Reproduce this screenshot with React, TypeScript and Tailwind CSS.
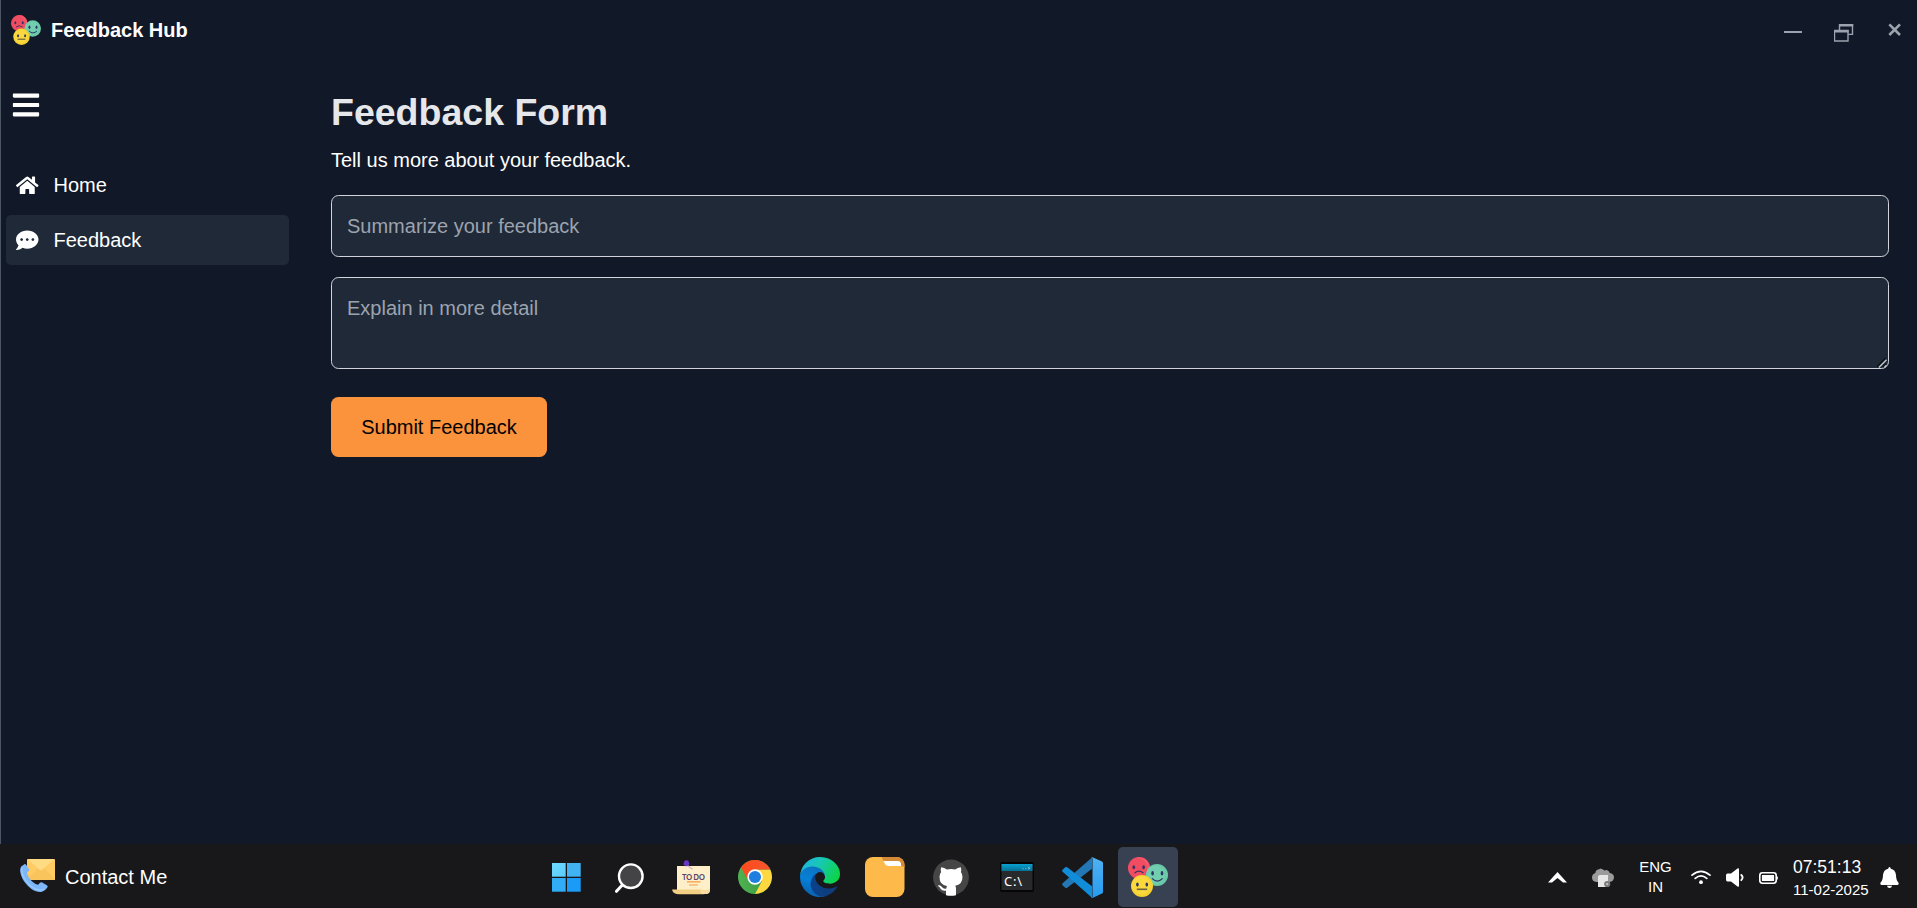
import React from "react";
import { FaBars, FaCommentDots, FaHome } from "react-icons/fa";

type IconProps = { className?: string };

function FacesIcon({ className }: IconProps) {
  return (
    <svg viewBox="0 0 40 40" className={className}>
      <circle cx="11" cy="11" r="11" fill="#f04d62" />
      <path d="M11 0a11 11 0 0 1 0 22q9-2 8-12Q18 2 8 .5Z" fill="#ff5e70" opacity=".5" />
      <ellipse cx="5.8" cy="10.3" rx="1.3" ry="2" fill="#2d3563" />
      <ellipse cx="15.6" cy="10.3" rx="1.3" ry="2" fill="#2d3563" />
      <path d="M7 15.8Q11 12.6 15 15.8" fill="none" stroke="#2d3563" strokeWidth="1.2" strokeLinecap="round" />
      <circle cx="29" cy="18" r="11" fill="#69c9a8" />
      <circle cx="27.5" cy="17.5" r="9" fill="#7cd6b8" opacity=".45" />
      <ellipse cx="24.6" cy="16.3" rx="1.3" ry="2.2" fill="#2d3563" />
      <ellipse cx="34" cy="16.3" rx="1.3" ry="2.2" fill="#2d3563" />
      <path d="M24.3 21.6q5 5 10 0" fill="none" stroke="#2d3563" strokeWidth="1.3" strokeLinecap="round" />
      <circle cx="14" cy="29" r="11" fill="#f5d131" />
      <circle cx="13" cy="28.2" r="9.2" fill="#ffe04b" opacity=".5" />
      <ellipse cx="9.4" cy="27.6" rx="1.3" ry="2.1" fill="#2d3563" />
      <ellipse cx="18.8" cy="27.6" rx="1.3" ry="2.1" fill="#2d3563" />
      <path d="M8.8 32.3h10.4" stroke="#6c6540" strokeWidth="1.6" />
    </svg>
  );
}

function ContactIcon({ className }: IconProps) {
  return (
    <svg viewBox="0 0 36 34" className={className}>
      <rect x="7" y="0" width="28" height="21" rx="1" fill="#ffcb62" />
      <path d="M7 20.500 17 10h8l10 10.500q0 .5-1 .5H8q-1 0-1-.5Z" fill="#f9c45c" />
      <path d="M7.500 0h27L22 11q-1 .8-2 0Z" fill="#ffdb84" />
      <path d="M1.200 7.500 4 5.400q1.300-.8 2.200.5l2.800 4q.8 1.300-.4 2.300l-1.800 1.400q1 5 5 8.600 3 2.800 6.300 3.600l1.900-2q1-1 2.200-.2l4.600 2.700q1.400.9.500 2.300-1.800 3.200-5.300 4.100-7 1.300-14-5.700Q1 20 .2 12.500-.1 9.300 1.200 7.500Z" fill="#7db7f8" />
      <path d="M2 8.500q-1 4 1.800 9.700 4 8 12.200 12 4.500 1.800 8-.2" fill="none" stroke="#9accff" strokeWidth="1.300" />
    </svg>
  );
}

function WindowsIcon({ className }: IconProps) {
  return (
    <svg viewBox="0 0 29 29" className={className}>
      <defs>
        <linearGradient id="win-a" x1="0" y1="0" x2="1" y2="1">
          <stop offset="0" stopColor="#6fdcff" />
          <stop offset="1" stopColor="#5accfc" />
        </linearGradient>
      </defs>
      <path d="M0 0h13.700v13.700H0z" fill="url(#win-a)" />
      <path d="M15 0h13.700v13.700H15z" fill="#41b3f3" />
      <path d="M0 15h13.700v13.700H0z" fill="#31adf8" />
      <path d="M15 15h13.700v13.700H15z" fill="#1b9bf8" />
    </svg>
  );
}

function SearchIcon({ className }: IconProps) {
  return (
    <svg viewBox="0 0 29 30" className={className}>
      <path d="M1.500 28.300 7.300 22" stroke="#fff" strokeWidth="3" strokeLinecap="round" />
      <circle cx="15.800" cy="13.200" r="11.800" fill="#444446" stroke="#fff" strokeWidth="2.400" />
    </svg>
  );
}

function TodoIcon({ className }: IconProps) {
  return (
    <svg viewBox="0 0 38 35" className={className}>
      <path d="M5 6h33v24q0 4-4 4H5Z" fill="#ffefc8" />
      <path d="M0 29.500h28.500q0 4.500 4.500 4.800H7Q1 34.300 0 29.500Z" fill="#f3cf84" />
      <path d="M28.500 29q.5 5 5 5 4.500-.3 4.500-5.500-3 2.500-9.500.5Z" fill="#fbdda0" />
      <path d="m15.500 5.500 5 3.700" stroke="#cbb5c6" strokeWidth="1.200" />
      <path d="M12.500 1q2-1.500 4 0l1 3.200-3.500 2.200-2.700-2.200Z" fill="#6a36c9" />
      <text x="10" y="19.500" fontFamily="Noto Sans, sans-serif" fontWeight="600" fontSize="8" textLength="23" fill="#59456c">TO DO</text>
      <path d="M15 21.900h13.500M17 25h9" stroke="#f79b42" strokeWidth="1.200" />
    </svg>
  );
}

function ChromeIcon({ className }: IconProps) {
  return (
    <svg viewBox="0 0 34 34" className={className}>
      <defs>
        <linearGradient id="chrome-r" x1="0" y1="0" x2="1" y2="0">
          <stop offset="0" stopColor="#ff4a1c" />
          <stop offset="1" stopColor="#f55530" />
        </linearGradient>
        <linearGradient id="chrome-g" x1="0" y1="0" x2="1" y2="0">
          <stop offset="0" stopColor="#4fb352" />
          <stop offset="1" stopColor="#37953d" />
        </linearGradient>
      </defs>
      <circle cx="17" cy="17" r="17" fill="url(#chrome-g)" />
      <path d="M17 9.500h15.200A17 17 0 0 1 17 34l7-13Z" fill="#ffd740" />
      <path d="M3 7.500A17 17 0 0 1 32.300 9.500H17L10 20Z" fill="url(#chrome-r)" />
      <circle cx="17" cy="17" r="7.700" fill="#fff" />
      <circle cx="17" cy="17" r="6.100" fill="#1f7fe0" />
    </svg>
  );
}

function EdgeIcon({ className }: IconProps) {
  return (
    <svg viewBox="0 0 256 256" className={className}>
      <defs>
        <linearGradient id="edge-navy" x1="0" y1="0" x2="1" y2="0">
          <stop offset="0" stopColor="#0a4390" />
          <stop offset="1" stopColor="#113a74" />
        </linearGradient>
        <linearGradient id="edge-blue" x1=".6" y1="0" x2=".3" y2="1">
          <stop offset="0" stopColor="#0d70bd" />
          <stop offset=".5" stopColor="#0680d7" />
          <stop offset="1" stopColor="#0b5cab" />
        </linearGradient>
        <linearGradient id="edge-green" x1="0" y1=".3" x2="1" y2=".7">
          <stop offset="0" stopColor="#1fb5df" />
          <stop offset=".4" stopColor="#18c7b4" />
          <stop offset="1" stopColor="#0bd541" />
        </linearGradient>
      </defs>
      <path d="M231 190.500c-3.400 1.800-6.900 3.400-10.500 4.700a101 101 0 0 1-35.600 6.400c-47 0-87.900-32.300-87.900-73.800a31.300 31.300 0 0 1 16.300-27.200C70.800 102.400 59.900 146.700 59.900 172.700c0 73.500 67.700 80.900 82.300 80.900 7.900 0 19.800-2.300 26.900-4.500l1.300-.5a128 128 0 0 0 66.600-52.700 4 4 0 0 0-6-5.400z" fill="url(#edge-navy)" />
      <path d="M105.700 241.400a79.200 79.200 0 0 1-22.700-21.300 80.700 80.700 0 0 1 29.500-120c3.100-1.500 8.500-4.100 15.600-4a32.400 32.400 0 0 1 25.700 13 32 32 0 0 1 6.300 18.700c0-.2 24.500-79.600-80-79.600C36.200 48.200 0 90 0 126.600a130 130 0 0 0 12.100 56 128 128 0 0 0 156.400 67 75.500 75.500 0 0 1-62.800-8.200z" fill="url(#edge-blue)" />
      <path d="M152.300 148.900c-.8 1-3.300 2.500-3.300 5.700 0 2.600 1.700 5.100 4.700 7.200 14.400 10 41.500 8.700 41.600 8.700a59.600 59.600 0 0 0 30.300-8.400A61.400 61.400 0 0 0 256 109.200c.3-22.400-8-37.300-11.300-43.900C223.500 23.900 177.700 0 128 0A128 128 0 0 0 0 126.200c.5-36.500 36.800-66 80-66 3.500 0 23.500.3 42 10 16.300 8.600 24.900 18.900 30.800 29.200 6.200 10.700 7.300 24.100 7.300 29.500 0 5.300-2.700 13.300-7.800 20z" fill="url(#edge-green)" />
    </svg>
  );
}

function FolderIcon({ className }: IconProps) {
  return (
    <svg viewBox="0 0 40 40" className={className}>
      <rect width="39.500" height="40" rx="8" fill="#fdb94a" />
      <path d="M16.500 0h14.500q8.500 0 8.500 8.500v2q-1-1.500-3-1.500H24q-3 0-4.200-3Z" fill="#d58a38" />
      <path d="M18.500 4h14.500q2.800.3 3 3v2H23.500q-3 0-4-3Z" fill="#fff" />
    </svg>
  );
}

function GithubIcon({ className }: IconProps) {
  return (
    <svg viewBox="0 0 36 37" className={className}>
      <circle cx="18" cy="18.500" r="17.900" fill="#464646" />
      <path d="M8.200 8.200q3.200.3 5.600 2.200 4.200-.7 8.400 0 2.400-1.900 5.600-2.200.8 2.800.1 4.800 1.600 2 1.600 5 0 7.700-7.300 8.800.8 1 .8 2.800v6.600q-5 1.300-10 0v-4.600q-3.700.7-5.200-1.500-1.300-2.600-2.800-3.200l.8-.9q2 .3 3.200 2 1.600 2.400 4.300 1.500l.6-2.500Q6.500 26 6.500 18q0-3 1.600-5-.7-2 .1-4.800Z" fill="#fff" />
    </svg>
  );
}

function TerminalIcon({ className }: IconProps) {
  return (
    <svg viewBox="0 0 34 30" className={className}>
      <defs>
        <linearGradient id="term-bar" x1="0" y1="0" x2="0" y2="1">
          <stop offset="0" stopColor="#0aa1cf" />
          <stop offset="1" stopColor="#047196" />
        </linearGradient>
      </defs>
      <rect width="34" height="30" rx="2.500" fill="#050506" />
      <rect x="1.500" y="2" width="31" height="26" fill="#28292b" />
      <rect x="1.500" y="2" width="31" height="7" fill="url(#term-bar)" />
      <path d="M22.500 6.800h1.200M25.200 6.800h1.200M28 5.200l2 1-2 1" fill="none" stroke="#8dcce0" strokeWidth=".8" />
      <text x="4" y="23.800" fontFamily="Noto Sans, sans-serif" fontSize="13" textLength="18" fill="#fff">C:\</text>
    </svg>
  );
}

function VsCodeIcon({ className }: IconProps) {
  return (
    <svg viewBox="0 0 41 41" className={className}>
      <defs>
        <linearGradient id="code-r" x1="0" y1="0" x2="0" y2="1">
          <stop offset="0" stopColor="#50b2f2" />
          <stop offset="1" stopColor="#279bef" />
        </linearGradient>
      </defs>
      <path d="M30 .4V11.700L5.200 30.700q-1 .7-2 0L.6 28.300q-.9-1 0-2Z" fill="#2477b5" />
      <path d="M.6 12.700 3.200 10.300q1-.7 2 0L30 29.300V40.700L.6 14.700q-.9-1 0-2Z" fill="#118cd8" />
      <path d="m30 .2 1 .2L40 4.500q1 .5 1 1.600v28.800q0 1.100-1 1.600l-9 4.200q-1 .3-2-.5 1.500.6 1.500-1V1.800q0-1.500-1.500-1Z" fill="url(#code-r)" />
    </svg>
  );
}

function CloudIcon({ className }: IconProps) {
  return (
    <svg viewBox="0 0 22 20" className={className}>
      <path d="M4.500 14Q0 13.500 0 9.500 0 6 3.300 5 4 1.300 7.300 1.300 8.500-.2 9.500 1q2 0 3 1.700 1.500-1.300 4 .2 1 .8 1.200 2.100Q22 5.700 22 9.500q-.3 4-4.500 4.500Z" fill="#9b9b9c" />
      <path d="M6 9q0-2 2-2h8v12H6Z" fill="#e7e7e8" />
      <circle cx="15.200" cy="16" r="3.100" fill="#7b7b7d" />
      <circle cx="15.200" cy="16" r="1.100" fill="#c9c9ca" />
    </svg>
  );
}

function WifiIcon({ className }: IconProps) {
  return (
    <svg viewBox="0 0 20 15" className={className} fill="none" stroke="#fff" strokeWidth="1.700" strokeLinecap="round">
      <path d="M1 5.200q9-7.800 18 0M4.200 8.400q5.800-5 11.600 0" />
      <circle cx="10" cy="12.200" r="1.900" fill="#fff" stroke="none" />
    </svg>
  );
}

function SpeakerIcon({ className }: IconProps) {
  return (
    <svg viewBox="0 0 18 19" className={className}>
      <path d="M0 7.500q0-1.800 1.500-2H5L11.500.5q1.500-.8 1.500 1v16q0 1.800-1.500 1L5 13.500H1.500Q0 13.300 0 11.500Z" fill="#fff" />
      <path d="M15.300 7q2.600 2.600 0 5.200" fill="none" stroke="#fff" strokeWidth="1.800" strokeLinecap="round" />
    </svg>
  );
}

function BatteryIcon({ className }: IconProps) {
  return (
    <svg viewBox="0 0 19 12" className={className}>
      <rect x=".8" y=".8" width="16.400" height="10.400" rx="2.600" fill="none" stroke="#fff" strokeWidth="1.600" />
      <rect x="2.900" y="3" width="12.200" height="6" fill="#fff" />
      <path d="M17.200 4q1.800 0 1.800 2t-1.800 2Z" fill="#fff" />
    </svg>
  );
}

function BellIcon({ className }: IconProps) {
  return (
    <svg viewBox="0 0 19 21" className={className} fill="#fff">
      <path d="M8.300 1.700V1.200q1.200-2.200 2.400 0v.5Q15.500 2.700 16 8q0 5 2.200 7.200Q19.500 17.500 17.500 18h-16Q-.5 17.500.8 15.200 3 13 3 8 3.500 2.700 8.300 1.700Z" />
      <path d="M7 18.800h5q-.4 2.200-2.500 2.200T7 18.800Z" />
    </svg>
  );
}

function WindowControls() {
  return (
    <div className="flex items-start pt-[23px] text-[#9ca3af]">
      <svg viewBox="0 0 18 3" className="mt-2 h-[3px] w-[18px]">
        <path d="M0 1h18" stroke="currentColor" strokeWidth="2" />
      </svg>
      <svg viewBox="0 0 20 18" className="ml-8 mt-px h-[18px] w-5" fill="none" stroke="currentColor">
        <path d="M5.500 6.500V.500h13v9.900h-4M.500 6.500h13.500v10.500H.500z" strokeWidth="1.400" />
        <path d="M5 1.300h14.200M0 7.300h14.700" strokeWidth="2.600" />
      </svg>
      <svg viewBox="0 0 14 14" className="ml-[34px] mr-px h-3.5 w-3.5" stroke="currentColor" strokeWidth="2.600">
        <path d="m1.300 1.300 10.700 10.700M12 1.300 1.300 12" />
      </svg>
    </div>
  );
}

function Sidebar() {
  return (
    <nav className="flex w-[300px] shrink-0 flex-col pl-[5px] pt-10 text-white">
      <button className="ml-[5px] w-fit" aria-label="Menu">
        <FaBars className="h-[30px] w-[30px]" />
      </button>
      <ul className="mt-10 flex w-[283px] flex-col gap-[5px]">
        <li className="flex h-[50px] items-center gap-[15px] rounded-[5px] pl-[10px]">
          <FaHome className="h-[22.5px] w-[22.5px]" />
          <span>Home</span>
        </li>
        <li className="flex h-[50px] items-center gap-[15px] rounded-[5px] bg-[#1f2937] pl-[10px]">
          <FaCommentDots className="h-[22.5px] w-[22.5px]" />
          <span>Feedback</span>
        </li>
      </ul>
    </nav>
  );
}

function FeedbackForm() {
  return (
    <main className="flex flex-1 flex-col items-start pl-[30px] pr-7 pt-10">
      <h1 className="text-[37.5px] font-bold leading-[45px] text-[#e5e7eb]">Feedback Form</h1>
      <p className="mt-[10px] leading-[30px] text-white">Tell us more about your feedback.</p>
      <input
        className="mt-5 h-[62px] w-full rounded-[7.5px] border border-[#d1d5db] bg-[#1f2937] px-[15px] text-white placeholder:text-[#9ca3af]"
        placeholder="Summarize your feedback"
      />
      <div className="relative mt-5 h-[92px] w-full">
        <textarea
          className="block h-full w-full resize-none rounded-[7.5px] border border-[#d1d5db] bg-[#1f2937] p-[15px] leading-[30px] text-white placeholder:text-[#9ca3af]"
          placeholder="Explain in more detail"
        />
        <svg viewBox="0 0 10 10" className="absolute bottom-px right-[2px] h-[10px] w-[10px]">
          <path d="M0 9 8.500.5M6 9l3-3" stroke="#0a0c10" strokeWidth="1.400" />
          <path d="m1.800 9.500 7.700-7.700M7.300 9.500l2.200-2.200" stroke="#c4c7cb" strokeWidth="1.400" />
        </svg>
      </div>
      <button className="mt-7 h-[60px] w-[216px] rounded-[7.5px] bg-[#fb923c] text-black">Submit Feedback</button>
    </main>
  );
}

function Taskbar() {
  return (
    <footer className="flex h-16 items-center bg-[#18181b] text-white">
      <div className="flex w-[552px] items-center gap-[9px] pl-5">
        <ContactIcon className="h-[34px] w-[36px]" />
        <span className="mt-[2px]">Contact Me</span>
      </div>
      <div className="flex items-center">
        <WindowsIcon className="mt-[3px] h-[29px] w-[29px]" />
        <SearchIcon className="ml-[34px] mt-[3px] h-[30px] w-[29px]" />
        <TodoIcon className="ml-[28px] mt-[3px] h-[35px] w-[38px]" />
        <ChromeIcon className="ml-[28px] mt-[2px] h-[34px] w-[34px]" />
        <EdgeIcon className="ml-[28px] mt-[2px] h-10 w-10" />
        <FolderIcon className="ml-[25px] mt-[2px] h-10 w-10" />
        <GithubIcon className="ml-[28px] mt-[3px] h-[37px] w-[36px]" />
        <TerminalIcon className="ml-[31px] mt-[2px] h-[30px] w-[34px]" />
        <VsCodeIcon className="ml-[28px] mt-[3px] h-[41px] w-[41px]" />
        <div className="ml-[15px] mt-[2px] flex h-[60px] w-[60px] items-center justify-center rounded-[5px] bg-[#374151]">
          <FacesIcon className="h-10 w-10" />
        </div>
      </div>
      <div className="flex flex-1 items-center justify-end pr-[18px]">
        <svg viewBox="0 0 19 11" className="mt-[3px] h-[11px] w-[19px]">
          <path d="M0 10.500 9.500 0 19 10.500h-4L9.500 6 4 10.500Z" fill="#fff" />
        </svg>
        <CloudIcon className="ml-[25px] mt-[3px] h-5 w-[22px]" />
        <div className="ml-[25px] mt-px flex w-[34px] flex-col items-center pr-px text-[15px] leading-5">
          <span>ENG</span>
          <span>IN</span>
        </div>
        <WifiIcon className="ml-[18px] mr-px mt-[2px] h-[15px] w-5" />
        <SpeakerIcon className="ml-[14px] mt-[3px] h-[19px] w-[18px]" />
        <BatteryIcon className="ml-[15px] mt-[3px] h-3 w-[19px]" />
        <div className="ml-[15px] mt-[3px] flex w-[77px] flex-col items-start">
          <span className="text-[17.5px] leading-[25px]">07:51:13</span>
          <span className="text-[15px] leading-5">11-02-2025</span>
        </div>
        <BellIcon className="ml-[10px] mt-[2px] h-[21px] w-[19px]" />
      </div>
    </footer>
  );
}

export default function App() {
  return (
    <div className="flex h-screen w-full flex-col overflow-hidden bg-[#111827] font-['Liberation_Sans',Arial,sans-serif] text-[20px] leading-[30px]">
      <div className="flex min-h-0 flex-1 flex-col border-l border-[#4b5563]">
        <header className="flex h-[50px] items-start justify-between pl-[10px] pr-3.5">
          <div className="flex items-center gap-[10px] pt-[15px]">
            <FacesIcon className="h-[30px] w-[30px]" />
            <span className="font-bold text-white">Feedback Hub</span>
          </div>
          <WindowControls />
        </header>
        <div className="flex min-h-0 flex-1">
          <Sidebar />
          <FeedbackForm />
        </div>
      </div>
      <Taskbar />
    </div>
  );
}
